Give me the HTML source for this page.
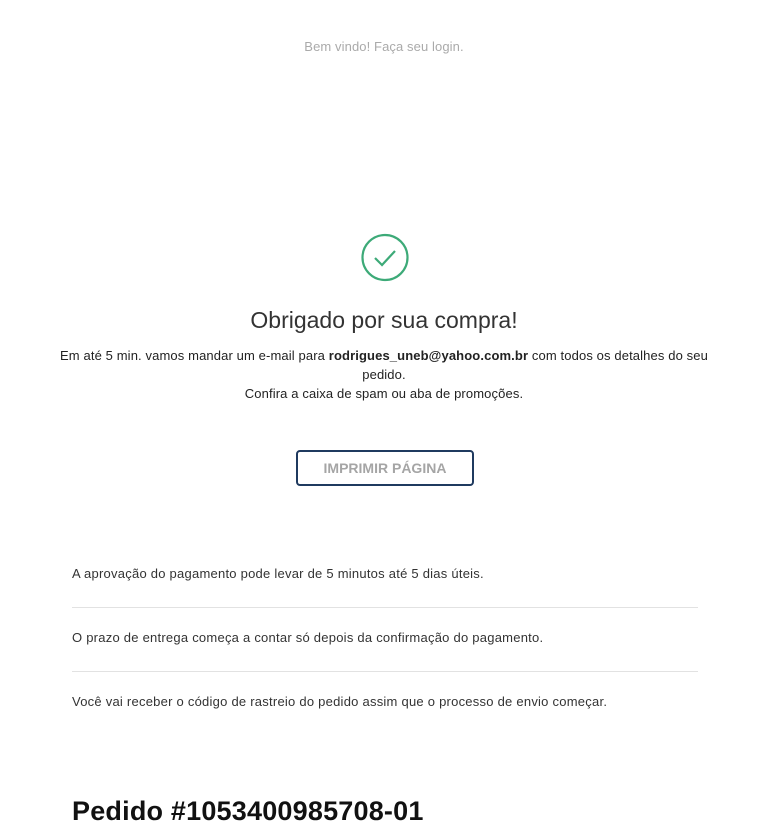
<!DOCTYPE html>
<html><head><meta charset="utf-8"><style>
body{margin:0;width:768px;height:831px;background:#fff;font-family:"Liberation Sans",sans-serif;color:#333;position:relative;overflow:hidden}
.a{position:absolute;white-space:nowrap}
.c{left:0;width:768px;text-align:center}
.p{font-size:13px;letter-spacing:0.12px;color:#222}
hr{position:absolute;left:72px;width:626px;border:0;border-top:1px solid #e2e2e2;margin:0}
</style></head><body>
<div class="a c" style="top:39px;font-size:13px;color:#aaa;letter-spacing:0.1px">Bem vindo! Faça seu login.</div>
<svg class="a" style="left:360px;top:233px" width="50" height="50" viewBox="0 0 50 50"><circle cx="25" cy="24.5" r="22.5" fill="none" stroke="#3daa78" stroke-width="2.2"/><path d="M15 25 L22 32 L35 18" fill="none" stroke="#3daa78" stroke-width="2.2"/></svg>
<div class="a c" style="top:307px;font-size:23px;color:#333">Obrigado por sua compra!</div>
<div class="a c p" style="top:348px">Em até 5 min. vamos mandar um e-mail para <b>rodrigues_uneb@yahoo.com.br</b> com todos os detalhes do seu</div>
<div class="a c p" style="top:367px">pedido.</div>
<div class="a c p" style="top:386px">Confira a caixa de spam ou aba de promoções.</div>
<div class="a" style="left:296px;top:450px;width:174px;height:32px;border:2px solid #1f3a5f;border-radius:4px;text-align:center;line-height:32px;font-size:14px;font-weight:bold;color:#a5a5a5">IMPRIMIR PÁGINA</div>
<div class="a p" style="left:72px;top:566px;color:#333;letter-spacing:0.24px">A aprovação do pagamento pode levar de 5 minutos até 5 dias úteis.</div>
<hr style="top:607px">
<div class="a p" style="left:72px;top:630px;color:#333;letter-spacing:0.24px">O prazo de entrega começa a contar só depois da confirmação do pagamento.</div>
<hr style="top:671px">
<div class="a p" style="left:72px;top:694px;color:#333;letter-spacing:0.24px">Você vai receber o código de rastreio do pedido assim que o processo de envio começar.</div>
<div class="a" style="left:72px;top:796px;font-size:27px;font-weight:bold;color:#111;letter-spacing:0.2px">Pedido #1053400985708-01</div>
</body></html>
